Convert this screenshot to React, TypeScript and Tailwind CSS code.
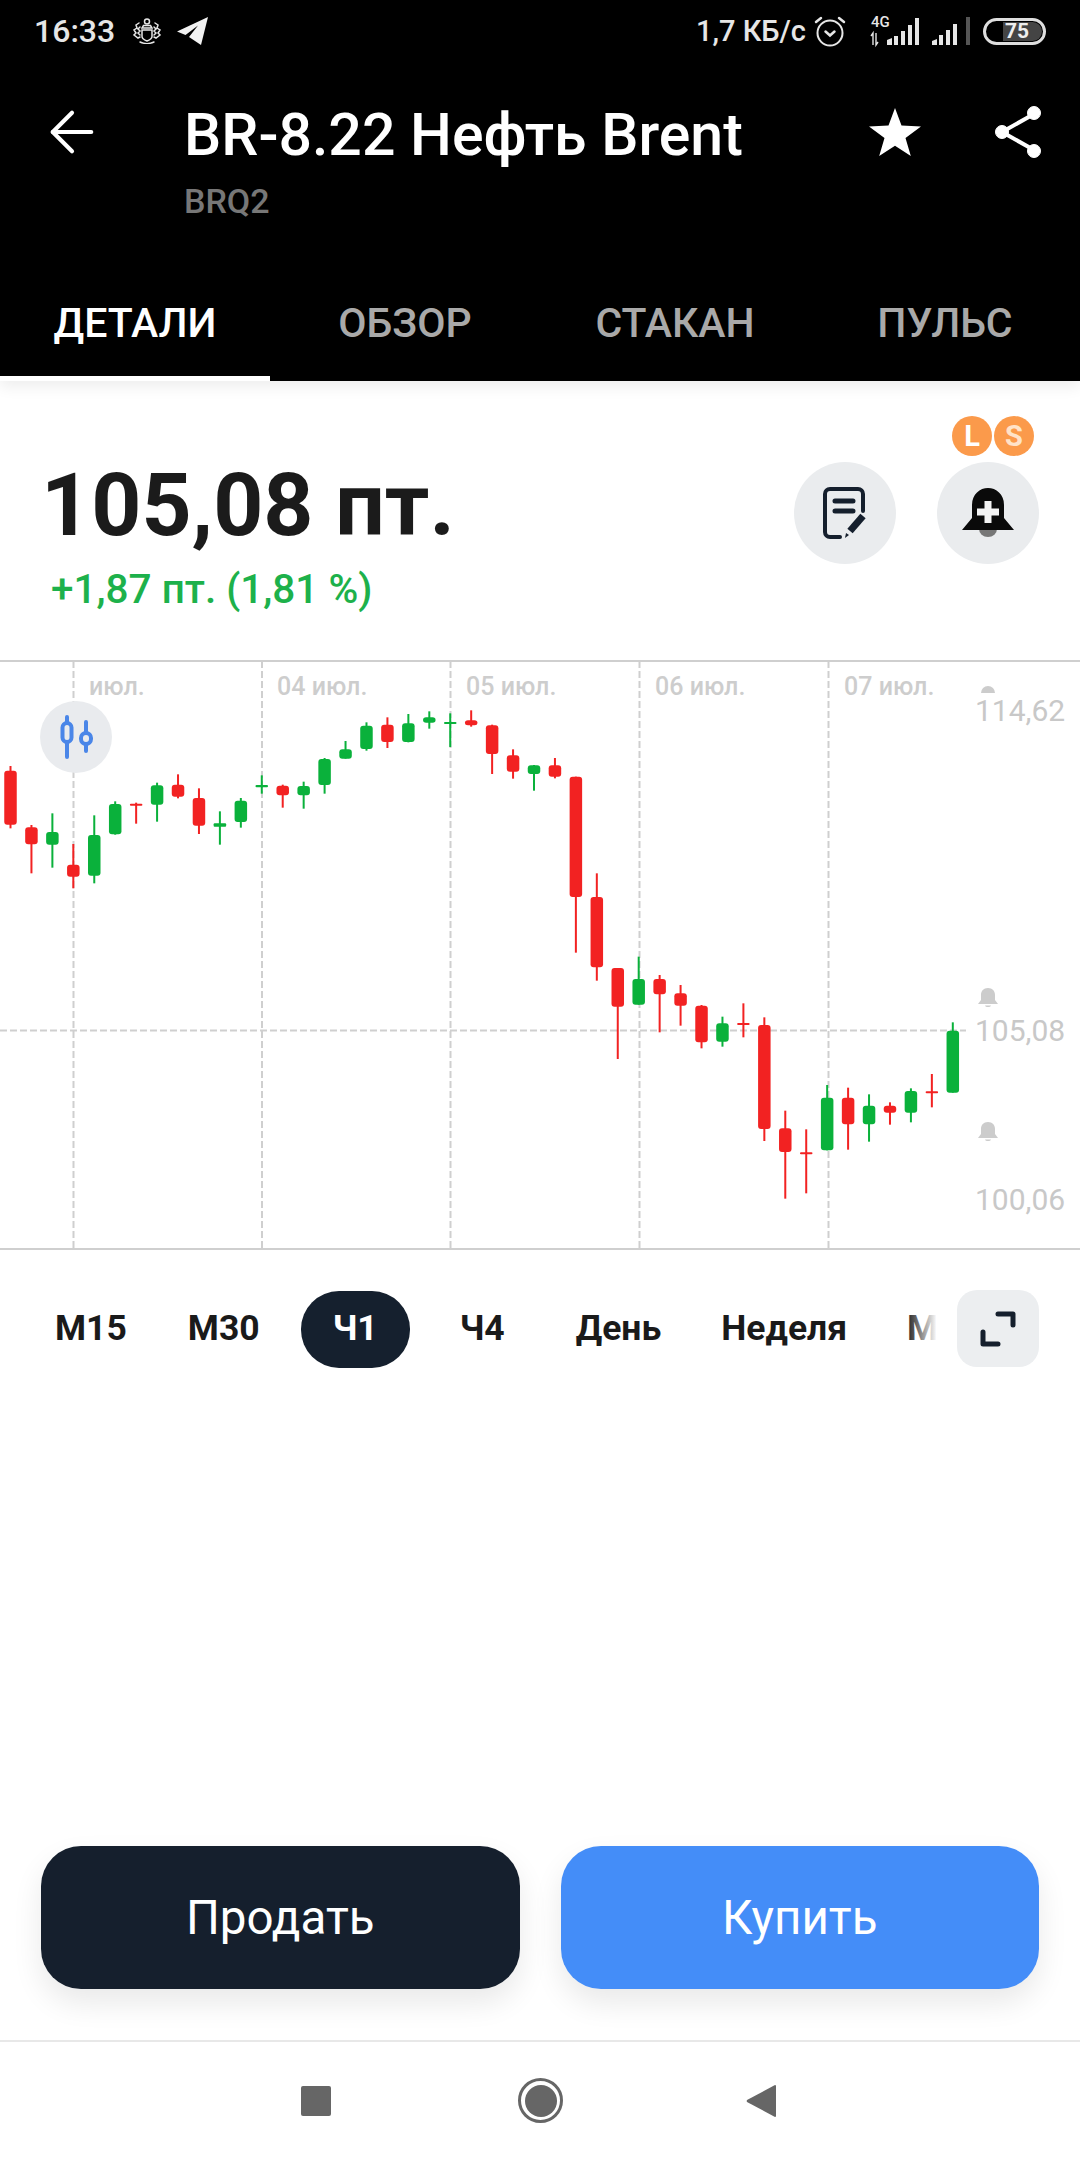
import { ArrowLeft } from "lucide-react";

// wick top, wick bottom, body top, body bottom (chart units, 3 per px), colour
const candles: [number, number, number, number, "r" | "g"][] = [
  [318, 505, 332, 494, "r"],
  [495, 640, 502, 553, "r"],
  [460, 623, 516, 554, "g"],
  [552, 685, 614, 650, "r"],
  [466, 670, 525, 647, "g"],
  [424, 524, 432, 523, "g"],
  [428, 491, 431, 434, "r"],
  [368, 485, 376, 434, "g"],
  [343, 415, 374, 410, "r"],
  [385, 522, 414, 497, "r"],
  [454, 554, 490, 500, "g"],
  [414, 503, 422, 486, "g"],
  [346, 401, 375, 382, "g"],
  [374, 443, 377, 406, "r"],
  [365, 446, 378, 406, "g"],
  [294, 401, 297, 375, "g"],
  [243, 296, 268, 296, "g"],
  [187, 272, 197, 267, "g"],
  [172, 264, 194, 246, "r"],
  [162, 247, 190, 246, "g"],
  [154, 206, 172, 188, "g"],
  [160, 261, 186, 191, "g"],
  [151, 200, 181, 196, "r"],
  [194, 342, 196, 282, "r"],
  [268, 356, 286, 335, "r"],
  [315, 392, 316, 342, "g"],
  [294, 355, 316, 350, "r"],
  [350, 878, 350, 711, "r"],
  [640, 962, 711, 922, "r"],
  [924, 1197, 924, 1040, "r"],
  [890, 1034, 957, 1034, "g"],
  [945, 1117, 957, 1003, "r"],
  [975, 1097, 1000, 1037, "r"],
  [1035, 1165, 1037, 1147, "r"],
  [1070, 1160, 1090, 1145, "g"],
  [1030, 1132, 1089, 1092, "r"],
  [1072, 1443, 1095, 1407, "r"],
  [1352, 1616, 1405, 1476, "r"],
  [1408, 1600, 1477, 1480, "r"],
  [1275, 1471, 1313, 1471, "g"],
  [1283, 1469, 1313, 1393, "r"],
  [1303, 1445, 1337, 1393, "g"],
  [1327, 1394, 1337, 1358, "r"],
  [1285, 1387, 1293, 1358, "g"],
  [1242, 1342, 1294, 1296, "r"],
  [1087, 1298, 1112, 1298, "g"],
];

const gridX = [73.5, 262, 450.5, 639.5, 828.5];
const dates = [
  { x: 89, label: "июл." },
  { x: 277, label: "04 июл." },
  { x: 466, label: "05 июл." },
  { x: 655, label: "06 июл." },
  { x: 844, label: "07 июл." },
];
const frames = [
  { label: "М15", className: "shrink-0 pl-[30px] pr-[31px]" },
  { label: "М30", className: "shrink-0 pl-[30px] pr-[11px]" },
  { label: "Ч1", className: "ml-[30px] mr-[20px] flex h-[77px] shrink-0 items-center rounded-[38px] bg-[#15202e] px-[32px] text-white" },
  { label: "Ч4", className: "shrink-0 pl-[30px] pr-[41px]" },
  { label: "День", className: "shrink-0 pl-[30px] pr-[30px]" },
  { label: "Неделя", className: "shrink-0 pl-[30px] pr-[30px]" },
  { label: "Месяц", className: "shrink-0 pl-[30px] pr-[30px]" },
];

const BellGlyph = ({ y }: { y: number }) => (
  <path
    transform={`translate(978 ${y})`}
    d="M10 0c-4.500 0-7 3-7 7v5l-3 4h20l-3-4V7c0-4-2.500-7-7-7zM7 17.500h6c-.5 2-5.500 2-6 0z"
    fill="#cccccc"
  />
);

const Chart = () => (
  <svg viewBox="0 662 1080 586" className="block h-[586px] w-full">
    {gridX.map((x) => (
      <line key={x} x1={x} x2={x} y1={661} y2={1248} stroke="#cfcfcf" strokeWidth="2" strokeDasharray="7 3" />
    ))}
    <line x1={0} x2={966} y1={1030.5} y2={1030.5} stroke="#cfcfcf" strokeWidth="2" strokeDasharray="7 3" />
    {dates.map((d) => (
      <text key={d.x} x={d.x} y={695} fontSize="25" fontWeight="500" fill="#cdcdcd">
        {d.label}
      </text>
    ))}
    {candles.map(([wt, wb, bt, bb, c], i) => {
      const x = 10.5 + i * 20.94;
      const color = c === "r" ? "#f22222" : "#0ab13b";
      const h = (bb - bt) / 3;
      return (
        <g key={i} fill={color}>
          <rect x={x - 1} y={660 + wt / 3} width="2" height={(wb - wt) / 3} />
          <rect x={x - 6.250} y={660 + bt / 3} width="12.500" height={Math.max(h, 2)} rx={h > 4 ? 3 : 1} />
        </g>
      );
    })}
    <g fill="#c8c8c8" fontSize="30">
      <path d="M981 693a7 7 0 0 1 14 0z" fill="#cccccc" />
      <text x={975} y={721}>114,62</text>
      <BellGlyph y={988} />
      <text x={975} y={1041}>105,08</text>
      <BellGlyph y={1122} />
      <text x={975} y={1210}>100,06</text>
    </g>
  </svg>
);

const StatusBar = () => (
  <div className="flex h-[62px] shrink-0 items-center pl-[34px] pr-[34px] text-[#e6e6e6]">
    <span className="text-[32px] font-medium leading-none">16:33</span>
    <svg viewBox="0 0 30 26" className="ml-[17px] h-[26px] w-[30px]" fill="none" stroke="#e6e6e6" strokeWidth="1.500" strokeLinecap="round">
      <circle cx="15" cy="3.500" r="2.500" />
      <path d="M11.500 7.500h7l1.500 2.500h-10z" />
      <path d="M10 12h10v6.500c0 2.500-2.500 3.500-5 4.500-2.500-1-5-2-5-4.500z" />
      <path d="M7 5L4 7l1 3-3 2 2 3-2 2 4 3 2-1M8 9l-2 2 2 2-2 2 2 2" />
      <path d="M23 5l3 2-1 3 3 2-2 3 2 2-4 3-2-1M22 9l2 2-2 2 2 2-2 2" />
      <path d="M8 24c4 2 10 2 14 0" />
    </svg>
    <svg viewBox="0 0 31 28" className="ml-[15px] h-[28px] w-[31px]" fill="#f2f2f2">
      <path d="M31 0L0 14.500l8.500 3.500L21 8.500 12 20l12 8z" />
    </svg>

    <span className="ml-auto text-[29px] font-medium leading-none">1,7 КБ/с</span>
    <svg viewBox="0 0 32 32" className="ml-[8px] h-[32px] w-[32px]" fill="none" stroke="#e6e6e6" strokeWidth="2" strokeLinecap="round">
      <circle cx="16" cy="18" r="12.500" />
      <path d="M2 7l5-4M30 7l-5-4" strokeWidth="2.500" />
      <path d="M11.500 16.500l4.500 4 4.500-4" strokeWidth="2.500" />
    </svg>
    <svg viewBox="0 0 52 30" className="ml-[24px] h-[30px] w-[52px] overflow-visible" fill="#e6e6e6">
      <text x="1" y="11" fontSize="15" fontWeight="500">4G</text>
      <path d="M3 29V17l-2 3M6 17v12l2-3" stroke="#e6e6e6" strokeWidth="1.400" fill="none" />
      <path d="M15 24l5-2v7h-5zM22 20h4v9h-4zM29 15h4v14h-4zM36 9h4v20h-4zM43 2h4v27h-4z" transform="translate(2 0)" />
    </svg>
    <svg viewBox="0 0 38 28" className="ml-[10px] h-[28px] w-[38px]">
      <path d="M0 24l5-2v6H0zM7 18h4v10H7zM14 13h4v15h-4zM21 7h4v21h-4z" fill="#e6e6e6" />
      <rect x="34" y="0" width="4" height="28" fill="#555" />
    </svg>
    <div className="ml-[13px] h-[27px] w-[63px] rounded-full border-[3px] border-[#dedede] p-[1px]">
      <div className="ml-[16px] flex h-full items-center rounded-r-full bg-[#444444] pl-[2px] text-[21px] font-bold leading-none text-[#eeeeee]">
        75
      </div>
    </div>
  </div>
);

const TitleRow = () => (
  <div className="flex items-start pl-[39px] pr-[38px]">
    <ArrowLeft className="mt-[37px] h-[66px] w-[66px] text-white" strokeWidth={1.500} />
    <div className="ml-[79px] mt-[37px] flex flex-col">
      <span className="text-[59px] font-medium leading-[72px] text-white">BR-8.22 Нефть Brent</span>
      <span className="mt-[10px] text-[34px] font-medium leading-[40px] text-[#777777]">BRQ2</span>
    </div>
    <svg viewBox="0 0 52 48" className="ml-auto mt-[46px] h-[48px] w-[52px]" fill="#ffffff">
      <path d="M26 0l6.500 17.500L52 18.500 36.500 30 41.800 48 26 37.800 10.200 48 15.500 30 0 18.500l19.500-1z" />
    </svg>
    <svg viewBox="0 0 48 52" className="ml-[73px] mt-[44px] h-[52px] w-[48px]" fill="#ffffff" stroke="#ffffff">
      <path d="M40 8L8 26l32 18" fill="none" strokeWidth="4" />
      <circle cx="40" cy="7" r="6.500" />
      <circle cx="8" cy="26" r="6.500" />
      <circle cx="40" cy="45" r="6.500" />
    </svg>
  </div>
);

const Tabs = () => (
  <div className="mt-auto grid h-[81px] grid-cols-4 text-[41px] font-medium leading-none">
    {["ДЕТАЛИ", "ОБЗОР", "СТАКАН", "ПУЛЬС"].map((tab, i) => (
      <div
        key={tab}
        className={
          i === 0
            ? "flex items-start justify-center border-b-[5px] border-white pt-[3px] text-white"
            : "flex items-start justify-center pt-[3px] text-[#a9a9a9]"
        }
      >
        {tab}
      </div>
    ))}
  </div>
);

export default function App() {
  return (
    <div className="flex h-[2160px] w-[1080px] flex-col overflow-hidden bg-white font-['Roboto',sans-serif]">
      <header className="relative z-10 flex h-[381px] shrink-0 flex-col bg-black shadow-[0_6px_14px_rgba(0,0,0,0.07)]">
        <StatusBar />
        <TitleRow />
        <Tabs />
      </header>

      <section className="relative flex h-[281px] shrink-0 border-b-2 border-[#cfcfcf] pl-[41px] pr-[41px]">
        <div className="flex flex-col">
          <span className="mt-[74px] text-[87.500px] font-bold leading-[100px] text-[#1b1b1b]">105,08 пт.</span>
          <span className="ml-[10px] mt-[10px] text-[40.500px] font-medium leading-[48px] text-[#1db14b]">+1,87 пт. (1,81 %)</span>
        </div>
        <div className="ml-auto mt-[81px] flex h-[102px] gap-[41px]">
          <div className="flex h-[102px] w-[102px] items-center justify-center rounded-full bg-[#eaecee]">
            <svg viewBox="0 0 44 52" className="h-[52px] w-[44px]" fill="none" stroke="#151f2d" strokeWidth="4" strokeLinecap="round">
              <path d="M40 24V7a5 5 0 0 0-5-5H7a5 5 0 0 0-5 5v38a5 5 0 0 0 5 5h10" />
              <path d="M12 14h18M12 24h18" strokeWidth="5" />
              <path d="M27 44l13-15" strokeWidth="7" strokeLinecap="butt" />
              <path d="M22 51l1-5 3 2z" fill="#151f2d" stroke="none" />
            </svg>
          </div>
          <div className="flex h-[102px] w-[102px] items-center justify-center rounded-full bg-[#eaecee]">
            <svg viewBox="0 0 52 50" className="h-[50px] w-[52px]">
              <path d="M17 40h18v1a9 8 0 0 1-18 0z" fill="#777777" />
              <path d="M26 0C18 0 10 6 10 17v13L0 42h52L42 30V17C42 6 34 0 26 0z" fill="#0a0a0a" />
              <path d="M22.500 13h7v7.500H37v7h-7.500V35h-7v-7.500H15v-7h7.500z" fill="#f3f3f3" />
            </svg>
          </div>
        </div>
        <div className="absolute right-[46px] top-[35px] flex">
          <span className="z-10 flex h-[40px] w-[40px] items-center justify-center rounded-full bg-[#fb9a4b] text-[29px] font-bold leading-none text-white">L</span>
          <span className="ml-[2px] flex h-[40px] w-[40px] items-center justify-center rounded-full bg-[#fb9a4b] text-[29px] font-bold leading-none text-[#ffe3c9]">S</span>
        </div>
      </section>

      <section className="relative h-[586px] shrink-0">
        <Chart />
        <div className="absolute left-[40px] top-[39px] flex h-[72px] w-[72px] items-center justify-center rounded-full bg-[#e9ebee]">
          <svg viewBox="0 0 34 44" className="h-[44px] w-[34px]" fill="none" stroke="#4a86e8" strokeWidth="4" strokeLinecap="round">
            <rect x="3.500" y="8" width="9" height="19" rx="4.500" />
            <path d="M8 2v6M8 27v15" />
            <rect x="22" y="18" width="10" height="11" rx="5" />
            <path d="M27 7v11M27 29v7" />
          </svg>
        </div>
      </section>

      <div className="h-[2px] shrink-0 bg-[#cfcfcf]" />

      <div className="relative mt-[40px] flex h-[77px] shrink-0 items-center pl-[25px] pt-[1px] text-[35.500px] font-bold leading-none text-[#1a1a1a]">
        <div className="flex w-[911px] items-center overflow-hidden">
          {frames.map((f) => (
            <span key={f.label} className={f.className}>
              {f.label}
            </span>
          ))}
        </div>
        <div className="absolute left-[906px] top-0 h-[77px] w-[31px] bg-gradient-to-r from-transparent to-white" />
        <div className="absolute left-[957px] top-0 flex h-[77px] w-[82px] items-center justify-center rounded-[20px] bg-[#eceef0]">
          <svg viewBox="0 0 38 38" className="h-[38px] w-[38px]" fill="none" stroke="#151f2d" strokeWidth="5" strokeLinecap="round" strokeLinejoin="round">
            <path d="M19 4h15v11M4 22v12h15" />
          </svg>
        </div>
      </div>

      <div className="mt-auto flex gap-[41px] pl-[41px] pr-[41px]">
        <button className="h-[143px] flex-1 rounded-[40px] bg-[#151f2d] pt-[3px] text-[47.500px] leading-none text-white shadow-[0_14px_30px_rgba(0,0,0,0.09)]">
          Продать
        </button>
        <button className="h-[143px] flex-1 rounded-[40px] bg-[#448df8] pt-[3px] text-[47.500px] leading-none text-white shadow-[0_14px_30px_rgba(0,0,0,0.09)]">
          Купить
        </button>
      </div>

      <nav className="mt-[51px] flex h-[120px] items-start border-t-2 border-[#e8e8e8]">
        <div className="ml-[301px] mt-[44px] h-[30px] w-[30px] rounded-[2px] bg-[#666666]" />
        <div className="ml-[187px] mt-[36px] flex h-[45px] w-[45px] items-center justify-center rounded-full border-[3px] border-[#666666]">
          <div className="h-[32px] w-[32px] rounded-full bg-[#666666]" />
        </div>
        <svg viewBox="0 0 30 32" className="ml-[183px] mt-[43px] h-[32px] w-[30px]" fill="#666666">
          <path d="M29 0a1 1 0 0 1 1 1v30a1 1 0 0 1-1 1L1 17a2 2 0 0 1 0-2z" />
        </svg>
      </nav>
    </div>
  );
}
